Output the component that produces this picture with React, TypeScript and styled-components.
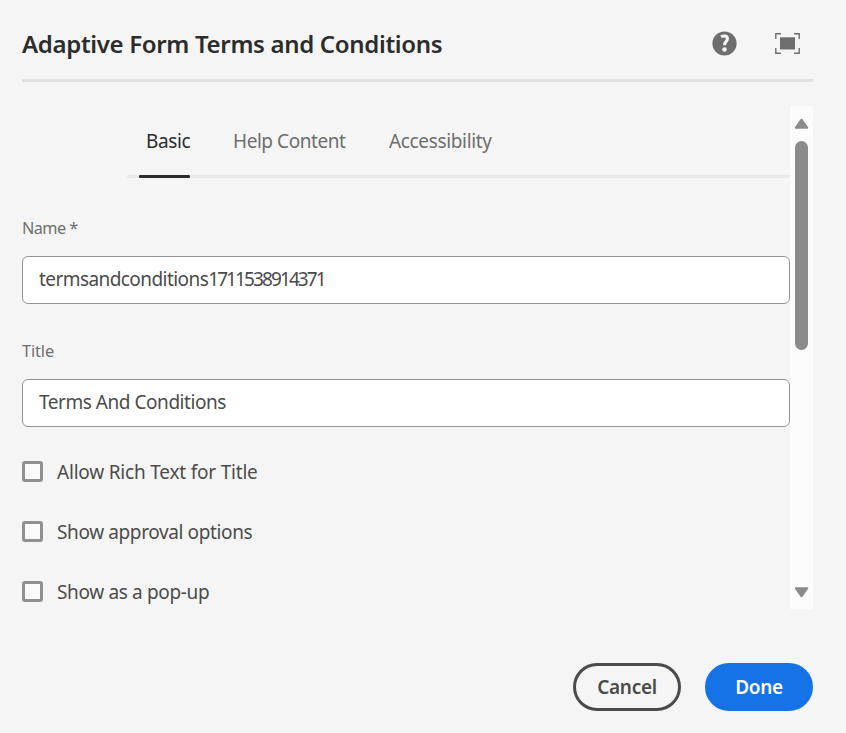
import React, { useState } from "react";
import styled, { createGlobalStyle } from "styled-components";

const Global = createGlobalStyle`
  * { box-sizing: border-box; }
  body { margin: 0; background: #f5f5f5; }
`;

const Dialog = styled.main`
  width: 846px;
  height: 733px;
  padding: 0 33px 0 22px;
  overflow: hidden;
  background: #f5f5f5;
  color: #4b4b4b;
  font: 400 19px/24px "Noto Sans", sans-serif;
`;

const Header = styled.header`
  display: flex;
  align-items: center;
  justify-content: space-between;
  height: 82px;
  padding: 6px 13px 0 0;
  border-bottom: 3px solid #e1e1e1;
`;

const Heading = styled.h1`
  margin: 3px 0 0;
  color: #2c2c2c;
  font-size: 24px;
  font-weight: 600;
  line-height: 30px;
  letter-spacing: -0.33px;
  white-space: nowrap;
`;

const HeaderActions = styled.div`
  display: flex;
  align-items: center;
  gap: 38px;
  margin-top: 1px;
  color: #6e6e6e;
`;

const IconButton = styled.button`
  display: flex;
  padding: 0;
  border: 0;
  background: none;
  color: inherit;
`;

const Body = styled.div`
  display: flex;
  height: 503px;
  margin-top: 24px;
`;

const Content = styled.div`
  width: 768px;
  overflow: hidden;
`;

const TabList = styled.div`
  display: grid;
  grid-template-columns: 87px 156px auto;
  height: 72px;
  margin-left: 105px;
  padding: 23px 0 0 19px;
  border-bottom: 3px solid #eaeaea;
`;

const Tab = styled.button<{ $active?: boolean; $tracking: number }>`
  position: relative;
  height: 49px;
  padding: 0 0 25px;
  border: 0;
  background: none;
  color: ${(p) => (p.$active ? "#2c2c2c" : "#6e6e6e")};
  font: inherit;
  letter-spacing: ${(p) => p.$tracking}px;
  text-align: left;
  white-space: nowrap;

  &::after {
    content: "";
    display: ${(p) => (p.$active ? "block" : "none")};
    position: absolute;
    left: -7px;
    bottom: 0;
    width: 51px;
    height: 3px;
    border-radius: 1px;
    background: #2c2c2c;
  }
`;

const Field = styled.div<{ $top: number }>`
  margin-top: ${(p) => p.$top}px;
`;

const FieldLabel = styled.div<{ $tracking: number }>`
  height: 24px;
  margin-bottom: 16px;
  color: #6e6e6e;
  font-size: 16.3px;
  letter-spacing: ${(p) => p.$tracking}px;
`;

const TextBox = styled.div<{ $tracking: number }>`
  height: 48px;
  padding: 10px 16px;
  border: 1px solid #959595;
  border-radius: 6px;
  background: #fff;
  letter-spacing: ${(p) => p.$tracking}px;
  white-space: nowrap;
`;

const Digits = styled.span`
  letter-spacing: -1.9px;
`;

const CheckList = styled.div`
  display: grid;
  gap: 36px;
  margin-top: 33px;
`;

const CheckRow = styled.label<{ $tracking: number }>`
  display: flex;
  align-items: center;
  gap: 14px;
  height: 24px;
  letter-spacing: ${(p) => p.$tracking}px;
`;

const CheckBox = styled.input`
  appearance: none;
  width: 21px;
  height: 21px;
  margin: -1px 0 0;
  border: 3px solid #909090;
  border-radius: 3px;
  background: #fafafa;

  &:checked {
    background: #4b4b4b;
  }
`;

const ScrollTrack = styled.div`
  display: flex;
  flex-direction: column;
  align-items: center;
  width: 23px;
  height: 503px;
  padding: 12px 0 11px;
  background: #fcfcfc;
  color: #8b8b8b;
`;

const Thumb = styled.div`
  width: 13px;
  height: 209px;
  margin: 12px 0 auto;
  border-radius: 7px;
  background: #8b8b8b;
`;

const Footer = styled.footer`
  display: flex;
  justify-content: flex-end;
  gap: 24px;
  margin-top: 54px;
`;

const Button = styled.button<{ $primary?: boolean }>`
  width: 108px;
  height: 48px;
  padding: 0;
  border: 3px solid ${(p) => (p.$primary ? "#1473e6" : "#4b4b4b")};
  border-radius: 24px;
  background: ${(p) => (p.$primary ? "#1473e6" : "transparent")};
  color: ${(p) => (p.$primary ? "#fff" : "#4b4b4b")};
  font: 600 19px/24px "Noto Sans", sans-serif;
  letter-spacing: -0.3px;
`;

const HelpIcon = () => (
  <svg width="25" height="25" viewBox="0 0 25 25">
    <circle cx="12.5" cy="12.5" r="12.1" fill="currentColor" />
    <path
      d="M9 5.7C11.8 4.3 15.4 4.8 15.4 7.7C15.4 10.3 12.5 10.9 12.5 14.3"
      fill="none"
      stroke="#f5f5f5"
      strokeWidth="3.1"
    />
    <circle cx="12.5" cy="18.5" r="2.3" fill="#f5f5f5" />
  </svg>
);

const FullScreenIcon = () => (
  <svg width="25" height="21" viewBox="0 0 25 21">
    <path d="M.8 6V.8H6M19 .8h5.2V6M24.2 15v5.2H19M6 20.2H.8V15" fill="none" stroke="currentColor" strokeWidth="1.4" />
    <path d="M5 4.3h15v12.2H5z" fill="currentColor" />
  </svg>
);

const Arrow = ({ down }: { down?: boolean }) => (
  <svg width="15" height="11" viewBox="0 0 15 11">
    <path
      d={down ? "M1.7 1.2h11.6L7.5 9.3z" : "M1.7 9.8h11.6L7.5 1.7z"}
      fill="currentColor"
      stroke="currentColor"
      strokeWidth="2"
      strokeLinejoin="round"
    />
  </svg>
);

const tabs = [
  { label: "Basic", tracking: -0.4 },
  { label: "Help Content", tracking: -0.45 },
  { label: "Accessibility", tracking: -0.35 },
];

const options = [
  { label: "Allow Rich Text for Title", tracking: -0.2 },
  { label: "Show approval options", tracking: -0.38 },
  { label: "Show as a pop-up", tracking: -0.35 },
];

export default function App() {
  const [active, setActive] = useState(0);
  return (
    <>
      <Global />
      <Dialog>
        <Header>
          <Heading>Adaptive Form Terms and Conditions</Heading>
          <HeaderActions>
            <IconButton aria-label="Help"><HelpIcon /></IconButton>
            <IconButton aria-label="Toggle full screen"><FullScreenIcon /></IconButton>
          </HeaderActions>
        </Header>
        <Body>
          <Content>
            <TabList role="tablist">
              {tabs.map((t, i) => (
                <Tab key={t.label} role="tab" $active={i === active} $tracking={t.tracking} onClick={() => setActive(i)}>
                  {t.label}
                </Tab>
              ))}
            </TabList>
            <Field $top={38}>
              <FieldLabel $tracking={-0.6}>Name *</FieldLabel>
              <TextBox $tracking={-0.57}>termsandconditions<Digits>1711538914371</Digits></TextBox>
            </Field>
            <Field $top={35}>
              <FieldLabel $tracking={-0.1}>Title</FieldLabel>
              <TextBox $tracking={-0.46}>Terms And Conditions</TextBox>
            </Field>
            <CheckList>
              {options.map((o) => (
                <CheckRow key={o.label} $tracking={o.tracking}>
                  <CheckBox type="checkbox" />
                  {o.label}
                </CheckRow>
              ))}
            </CheckList>
          </Content>
          <ScrollTrack>
            <Arrow />
            <Thumb />
            <Arrow down />
          </ScrollTrack>
        </Body>
        <Footer>
          <Button>Cancel</Button>
          <Button $primary>Done</Button>
        </Footer>
      </Dialog>
    </>
  );
}
